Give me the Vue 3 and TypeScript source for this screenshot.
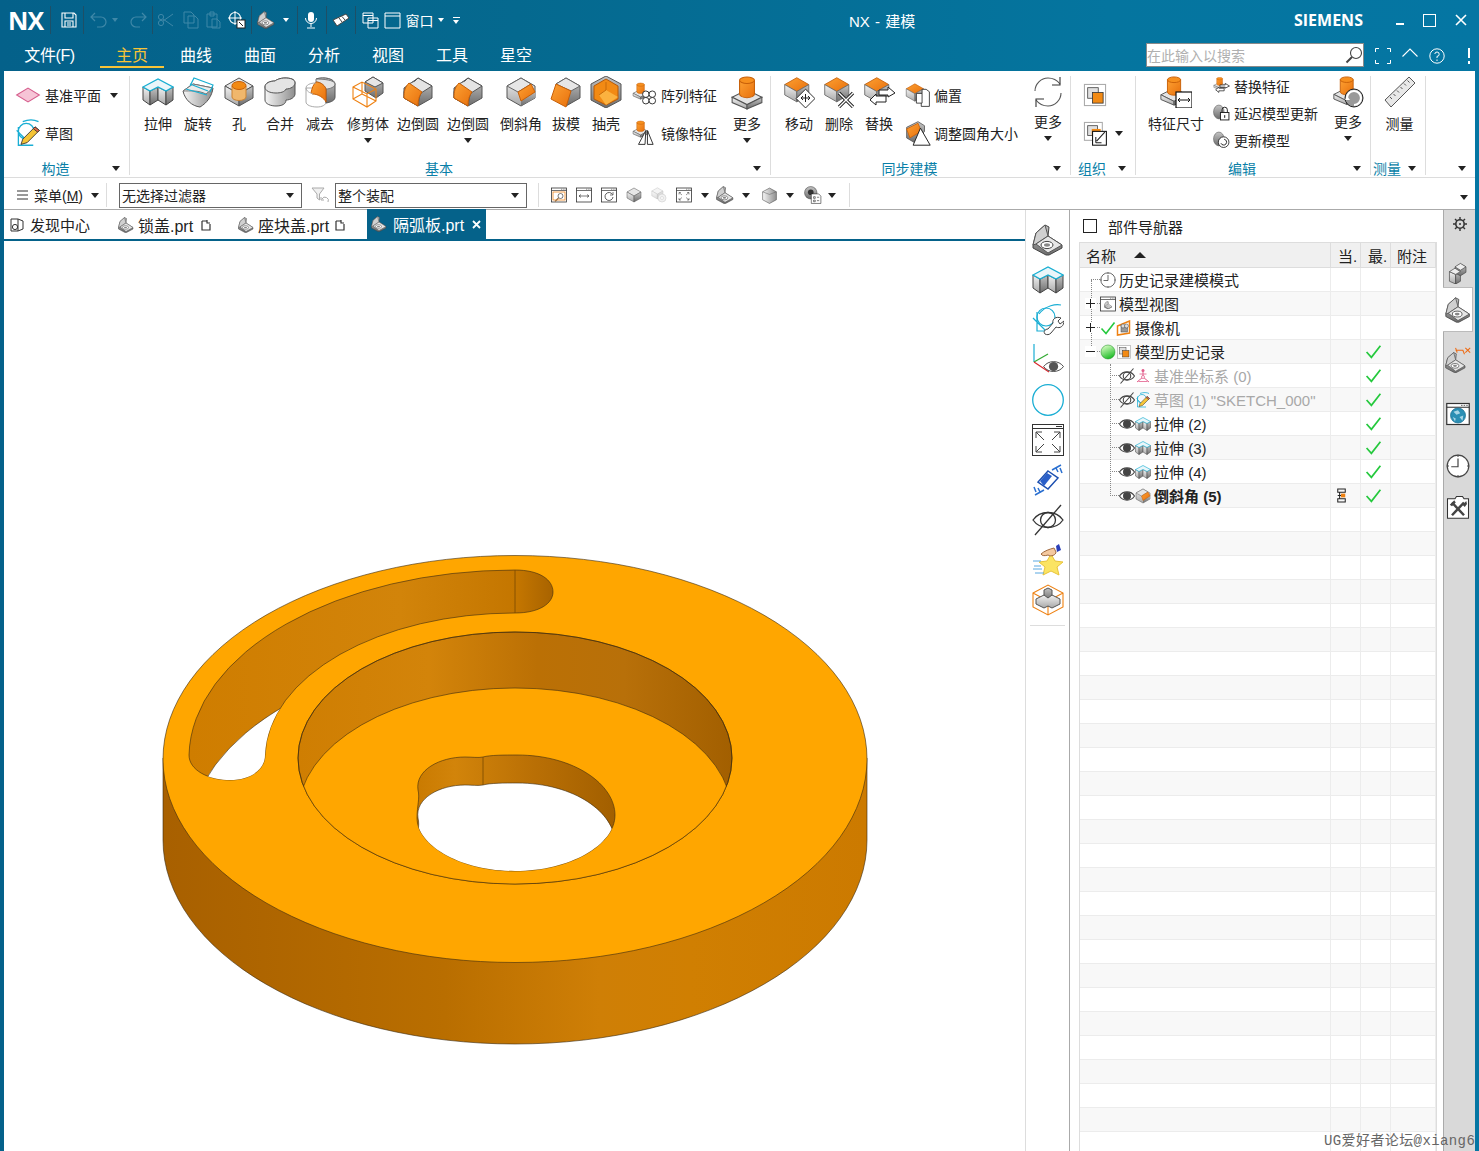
<script setup lang="ts">
import { h } from 'vue'
import type { FunctionalComponent } from 'vue'

const Ic: FunctionalComponent<{ n: string; s?: number }> = (props) =>
  h('svg', { width: props.s ?? 32, height: props.s ?? 32, viewBox: '0 0 32 32', class: 'ic' }, [
    h('use', { href: '#' + props.n }),
  ])
Ic.props = ['n', 's']

interface Btn {
  label: string
  icon: string
  w: number
  more?: boolean
}

const basic: Btn[] = [
  { label: '拉伸', icon: 'extrude', w: 40 },
  { label: '旋转', icon: 'revolve', w: 40 },
  { label: '孔', icon: 'hole', w: 42 },
  { label: '合并', icon: 'unite', w: 40 },
  { label: '减去', icon: 'subtract', w: 40 },
  { label: '修剪体', icon: 'trim', w: 56, more: true },
  { label: '边倒圆', icon: 'blend', w: 44 },
  { label: '边倒圆', icon: 'blend', w: 56, more: true },
  { label: '倒斜角', icon: 'chamfer', w: 50 },
  { label: '拔模', icon: 'draft', w: 40 },
  { label: '抽壳', icon: 'shell', w: 40 },
]
const sync: Btn[] = [
  { label: '移动', icon: 'move', w: 40 },
  { label: '删除', icon: 'del', w: 40 },
  { label: '替换', icon: 'replace', w: 40 },
]
const tabs = ['主页', '曲线', '曲面', '分析', '视图', '工具', '星空']
const viewIcons = ['vzoom', 'vfit', 'vrot', 'cubeg', 'gears']
const sideIcons = ['part', 'extrude', 'sketchtool', 'axeseye', 'circle', 'fit', 'diamond', 'eyeoff', 'star', 'wirecube']

interface Row {
  text: string
  indent: number
  marks: string[]
  toggle?: 'plus' | 'minus'
  dim?: boolean
  bold?: boolean
  latest?: boolean
  cur?: boolean
}
const rows: Row[] = [
  { text: '历史记录建模模式', indent: 20, marks: ['clock'] },
  { text: '模型视图', indent: 20, marks: ['views'], toggle: 'plus' },
  { text: '摄像机', indent: 20, marks: ['check', 'camera'], toggle: 'plus' },
  { text: '模型历史记录', indent: 20, marks: ['ball', 'org1'], toggle: 'minus', latest: true },
  { text: '基准坐标系 (0)', indent: 39, marks: ['eyeoffs', 'csys'], dim: true, latest: true },
  { text: '草图 (1) "SKETCH_000"', indent: 39, marks: ['eyeoffs', 'sketch'], dim: true, latest: true },
  { text: '拉伸 (2)', indent: 39, marks: ['eyes', 'extrude'], latest: true },
  { text: '拉伸 (3)', indent: 39, marks: ['eyes', 'extrude'], latest: true },
  { text: '拉伸 (4)', indent: 39, marks: ['eyes', 'extrude'], latest: true },
  { text: '倒斜角 (5)', indent: 39, marks: ['eyes', 'chamfer'], bold: true, latest: true, cur: true },
]
const emptyRows = 27
</script>

<template>
  <div class="app">
    <svg class="defs" width="0" height="0">
      <defs>
        <linearGradient id="gl" x1="0" y1="0" x2="0" y2="1"><stop offset="0" stop-color="#f2f2f2" /><stop offset="1" stop-color="#a8a8a8" /></linearGradient>
        <linearGradient id="gr" x1="0" y1="0" x2="0" y2="1"><stop offset="0" stop-color="#c4c4c4" /><stop offset="1" stop-color="#6c6c6c" /></linearGradient>
        <linearGradient id="go" x1="0" y1="0" x2="1" y2="1"><stop offset="0" stop-color="#fda133" /><stop offset="1" stop-color="#e8700c" /></linearGradient>
        <linearGradient id="gc" x1="0" y1="0" x2="1" y2="0"><stop offset="0" stop-color="#f6f6f6" /><stop offset="1" stop-color="#8e8e8e" /></linearGradient>
        <linearGradient id="gb" x1="0.3" y1="0.1" x2="0.7" y2="1"><stop offset="0" stop-color="#c7f7b5" /><stop offset="1" stop-color="#14b81e" /></linearGradient>

        <g id="cubebase">
          <polygon points="2,10 16,2 30,10 16,18" fill="#e6e6e6" stroke="#555" />
          <polygon points="2,10 16,18 16,30 2,22" fill="url(#gl)" stroke="#555" />
          <polygon points="30,10 16,18 16,30 30,22" fill="url(#gr)" stroke="#555" />
        </g>
        <g id="cubeor">
          <polygon points="2,10 16,2 30,10 16,18" fill="url(#go)" stroke="#c75f08" />
          <polygon points="2,10 16,18 16,30 2,22" fill="url(#gl)" stroke="#666" />
          <polygon points="30,10 16,18 16,30 30,22" fill="url(#gr)" stroke="#666" />
        </g>
        <g id="cylslab">
          <polygon points="2,20 16,13 30,20 16,27" fill="#e4e4e4" stroke="#555" />
          <polygon points="2,20 16,27 16,31 2,25" fill="url(#gl)" stroke="#555" />
          <polygon points="30,20 16,27 16,31 30,25" fill="url(#gr)" stroke="#555" />
          <path d="M9 4 V17 A7 3.4 0 0 0 23 17 V4 Z" fill="url(#go)" stroke="#c75f08" />
          <ellipse cx="16" cy="4" rx="7" ry="3" fill="#f7901e" stroke="#c75f08" />
        </g>

        <symbol id="extrude" viewBox="0 0 32 32">
          <polygon points="1,11 8,15 8,29 1,24" fill="url(#gl)" stroke="#444" />
          <polygon points="8,15 16,11 16,24 8,29" fill="url(#gr)" stroke="#444" />
          <polygon points="16,11 24,15 24,29 16,24" fill="url(#gl)" stroke="#444" />
          <polygon points="24,15 24,29 31,24 31,11" fill="url(#gr)" stroke="#444" />
          <polygon points="1,11 16,3 31,11 24,15 16,11 8,15" fill="#eaf6fa" stroke="#18aed2" stroke-width="1.3" />
        </symbol>
        <symbol id="revolve" viewBox="0 0 32 32">
          <path d="M1 15 L11 8 L31 12 C30 20 25 27 18 31 C10 30 3 24 1 15 Z" fill="url(#gc)" stroke="#555" />
          <path d="M1 15 L11 8 L31 12 L24 18 C16 14 8 15 1 15 Z" fill="#ececec" stroke="#777" />
          <path d="M8 10 L12 2 L31 9 L28 16 M8 8 L26 15 M4 13 L25 19" fill="none" stroke="#18aed2" stroke-width="1.2" />
        </symbol>
        <symbol id="hole" viewBox="0 0 32 32">
          <use href="#cubebase" />
          <path d="M9 10 V21 A7 3.5 0 0 0 23 21 V10 Z" fill="#f0b76c" stroke="#c98232" />
          <ellipse cx="16" cy="9.5" rx="7" ry="4" fill="#f28a14" stroke="#c75f08" />
        </symbol>
        <symbol id="unite" viewBox="0 0 32 32">
          <path d="M1 11 V24 C1 28 7 30 12 30 C18 30 22 28 22 24 C27 24 31 21 31 18 V7 C31 3 26 2 21 2 C16 2 12 4 11 5 C6 5 1 7 1 11 Z" fill="url(#gc)" stroke="#555" />
          <path d="M1 11 C1 7 6 5 11 5 C12 4 16 2 21 2 C26 2 31 3 31 7 C31 10 27 13 22 13 C21 16 16 17 12 17 C6 17 1 15 1 11 Z" fill="#e4e4e4" stroke="#555" />
        </symbol>
        <symbol id="subtract" viewBox="0 0 32 32">
          <path d="M2 12 V26 C2 29 7 31 13 31 C18 31 22 29 22 26 V12 Z" fill="#fff" stroke="#aaa" />
          <path d="M12 3 C20 0 31 3 31 8 V21 C31 24 28 26 22 27 L22 12 Z" fill="url(#gr)" stroke="#555" />
          <path d="M12 3 C19 3 31 4 31 8 C31 11 26 13 22 13 C20 9 16 6 12 6 Z" fill="#e4e4e4" stroke="#777" />
          <path d="M12 6 C17 6 22 10 22 14 V26 C20 22 14 18 9 18 C8 18 8 18 7 17 C8 12 9 9 12 6 Z" fill="url(#go)" stroke="#c75f08" />
          <path d="M12 7 C6 7 2 9 2 12 C2 15 6 17 9 18" fill="none" stroke="#aaa" />
        </symbol>
        <symbol id="trim" viewBox="0 0 32 32">
          <polygon points="13,6 21,1 31,7 31,17 24,22 13,15" fill="url(#gr)" stroke="#555" />
          <polygon points="13,6 21,1 31,7 23,11" fill="#e6e6e6" stroke="#555" />
          <path d="M1 11 L10 6 L24 13 L24 25 L15 31 L1 23 Z M1 11 L15 18 L24 13 M15 18 V31 M10 6 V18 L1 23 M10 18 L24 25" fill="none" stroke="#ee8112" stroke-width="1.1" />
        </symbol>
        <symbol id="blend" viewBox="0 0 32 32">
          <polygon points="16,2 30,10 30,22 16,30 2,22 2,12" fill="url(#gr)" stroke="#555" />
          <path d="M2 22 V16 C3 10 8 7 13 5 L16 2 L30 10 L19 17 C17 21 17 25 16 30 Z" fill="#e4e4e4" stroke="#555" />
          <path d="M2 22 L16 30 C16 24 17 20 20 16 L7 7 C3 11 2 15 2 22 Z" fill="url(#go)" stroke="#c75f08" />
        </symbol>
        <symbol id="chamfer" viewBox="0 0 32 32">
          <polygon points="2,10 16,2 30,10 30,22 16,30 2,22" fill="url(#gl)" stroke="#555" />
          <polygon points="30,14 30,22 16,30 16,22" fill="url(#gr)" />
          <polygon points="2,10 16,2 26,8 13,16" fill="#e6e6e6" stroke="#666" />
          <polygon points="13,16 26,8 30,16 16,25" fill="url(#go)" stroke="#c75f08" />
        </symbol>
        <symbol id="draft" viewBox="0 0 32 32">
          <polygon points="6,8 16,2 30,10 30,22 16,30" fill="url(#gr)" stroke="#555" />
          <polygon points="6,8 16,2 30,10 21,15" fill="#e6e6e6" stroke="#666" />
          <polygon points="6,8 21,15 16,31 1,23" fill="url(#go)" stroke="#c75f08" />
        </symbol>
        <symbol id="shell" viewBox="0 0 32 32">
          <polygon points="16,0 31,8 31,24 16,32 1,24 1,8" fill="url(#gr)" stroke="#555" />
          <polygon points="16,3 28,10 28,23 16,29 4,23 4,10" fill="#f28a14" stroke="#b85a08" />
          <polygon points="9,19 16,14 28,21 16,29" fill="#fbb23f" />
          <path d="M16 6 V14 L9 19" fill="none" stroke="#c86b0a" />
        </symbol>
        <symbol id="pattern" viewBox="0 0 32 32">
          <g transform="scale(.66) translate(0,1)"><use href="#cylslab" /></g>
          <g fill="#fff" stroke="#222" stroke-width="1.1"><circle cx="17" cy="15" r="4" /><circle cx="25" cy="15" r="4" /><circle cx="17" cy="23" r="4" /><circle cx="25" cy="23" r="4" /></g>
        </symbol>
        <symbol id="mirror" viewBox="0 0 32 32">
          <g transform="scale(.66) translate(0,1)"><use href="#cylslab" /></g>
          <path d="M17 13 L8 30 H16 Z M19 13 L26 30 H19 Z" fill="#fff" stroke="#222" stroke-width="1.1" />
        </symbol>
        <symbol id="more" viewBox="0 0 32 32"><use href="#cylslab" /></symbol>
        <symbol id="move" viewBox="0 0 32 32">
          <g transform="scale(.86)"><use href="#cubeor" /></g>
          <polygon points="24,14 34,24 24,34 14,24" fill="#fff" stroke="#222" transform="scale(.94)" />
          <path d="M19 22 H26 M22.5 18 V26 M20 20 L18 22 L20 24 M25 20 L27 22 L25 24" fill="none" stroke="#222" />
        </symbol>
        <symbol id="del" viewBox="0 0 32 32">
          <g transform="scale(.86)"><use href="#cubeor" /></g>
          <path d="M16 17 L30 31 M30 17 L16 31" stroke="#222" stroke-width="3.2" />
          <path d="M16 17 L30 31 M30 17 L16 31" stroke="#fff" stroke-width="1.4" />
        </symbol>
        <symbol id="replace" viewBox="0 0 32 32">
          <g transform="scale(.86)"><use href="#cubeor" /></g>
          <path d="M16 14 H25 V11 L32 17 L25 21 V19 H16 Z" fill="#fff" stroke="#222" />
          <path d="M23 20 H13 V18 L7 24 L13 29 V26 H23 Z" fill="#fff" stroke="#222" />
        </symbol>
        <symbol id="offset" viewBox="0 0 32 32">
          <g transform="scale(.76) translate(0,1)"><use href="#cubeor" /></g>
          <path d="M14 14 H21 V9 H26 L30 12 V30 H20 V26 H14 Z" fill="#fff" stroke="#222" />
          <path d="M21 14 V26 H20" fill="none" stroke="#222" />
        </symbol>
        <symbol id="resize" viewBox="0 0 32 32">
          <polygon points="2,9 16,2 24,7 24,14 12,28 2,22" fill="url(#gr)" stroke="#555" />
          <polygon points="2,11 16,4 20,14 6,22" fill="url(#go)" stroke="#c75f08" />
          <polygon points="19,10 31,31 10,31" fill="#fff" stroke="#222" stroke-width="1.2" />
        </symbol>
        <symbol id="sync" viewBox="0 0 32 32">
          <path d="M3 15 C3 8 9 2 16 2 C21 2 25 4 28 8 M29 17 C29 24 23 30 16 30 C11 30 7 28 4 24" fill="none" stroke="#555" stroke-width="1.1" />
          <path d="M28 1 V9 H20 M4 31 V23 H12" fill="none" stroke="#333" stroke-width="1.1" />
        </symbol>
        <symbol id="org1" viewBox="0 0 32 32">
          <rect x="3" y="3" width="26" height="26" fill="#fff" stroke="#aaa" stroke-width="1.3" />
          <rect x="7" y="7" width="13" height="13" fill="#e0e0e0" stroke="#444" />
          <rect x="13" y="13" width="13" height="13" fill="#f28a14" stroke="#333" />
        </symbol>
        <symbol id="org2" viewBox="0 0 32 32">
          <rect x="3" y="3" width="22" height="22" fill="#fff" stroke="#aaa" stroke-width="1.3" />
          <rect x="7" y="7" width="12" height="12" fill="#e0e0e0" stroke="#444" />
          <rect x="12" y="11" width="11" height="8" fill="#f28a14" />
          <rect x="13" y="14" width="17" height="17" fill="#fff" stroke="#111" stroke-width="1.3" />
          <path d="M17 28 V21 M17 28 H24 M18 26 L28 15" fill="none" stroke="#222" stroke-width="1.3" />
        </symbol>
        <symbol id="dim" viewBox="0 0 32 32">
          <g transform="translate(-1,0) scale(.94)"><use href="#cylslab" /></g>
          <rect x="16" y="16" width="16" height="16" fill="#fff" stroke="#111" stroke-width="1.2" />
          <path d="M18 24 H30 M20 22 L18 24 L20 26 M28 22 L30 24 L28 26" fill="none" stroke="#111" />
        </symbol>
        <symbol id="repl2" viewBox="0 0 32 32">
          <g transform="scale(.78)"><use href="#cylslab" /></g>
          <path d="M13 15 H23 V12 L31 17 L23 21 V19 H13 Z M21 21 H11 V19 L5 24 L11 29 V26 H21 Z" fill="#fff" stroke="#222" stroke-width="1.4" />
        </symbol>
        <symbol id="lock" viewBox="0 0 32 32">
          <ellipse cx="11" cy="15" rx="10" ry="13" fill="url(#gr)" stroke="#555" />
          <rect x="14" y="16" width="16" height="14" fill="#fff" stroke="#222" stroke-width="1.8" />
          <path d="M17 16 V11 A5 5 0 0 1 27 11 V16" fill="none" stroke="#222" stroke-width="1.8" />
          <rect x="21" y="21" width="2" height="5" fill="#222" />
        </symbol>
        <symbol id="update" viewBox="0 0 32 32">
          <ellipse cx="11" cy="15" rx="10" ry="13" fill="url(#gr)" stroke="#555" />
          <circle cx="20" cy="21" r="10" fill="#fff" stroke="#222" stroke-width="1.6" />
          <path d="M15 23 A5.5 5.5 0 1 0 21 15.5" fill="none" stroke="#222" stroke-width="1.8" />
        </symbol>
        <symbol id="moreup" viewBox="0 0 32 32">
          <g transform="scale(.92)"><use href="#cylslab" /></g>
          <circle cx="22" cy="22" r="9" fill="#999" stroke="#222" />
          <path d="M15 22 A7 7 0 1 1 22 29" fill="none" stroke="#fff" stroke-width="2.2" />
          <path d="M13 24 L15 20 L18 24 Z" fill="#fff" />
        </symbol>
        <symbol id="ruler" viewBox="0 0 32 32">
          <polygon points="1,24 25,1 31,7 7,31" fill="#e8e8e8" stroke="#555" />
          <path d="M6 21 L8 23 M9.5 18 L11.5 20 M13 14.5 L15 16.5 M16.5 11 L18.5 13 M20 7.5 L22 9.5 M23.5 4.5 L25.5 6.5" stroke="#555" />
        </symbol>
        <symbol id="plane" viewBox="0 0 32 32">
          <polygon points="3,16 16,8 29,16 16,24" fill="#f6c4d6" stroke="#d55d8c" stroke-width="1.2" />
        </symbol>
        <symbol id="sketch" viewBox="0 0 32 32">
          <path d="M10 3 C17 0 24 1 28 3 M3 13 L12 22 M5 9 V30 H22" fill="none" stroke="#1aaed4" stroke-width="1.5" />
          <circle cx="14" cy="14" r="9" fill="none" stroke="#1aaed4" stroke-width="1.5" />
          <path d="M8 29 L10 23 L24 9 L29 13 L15 27 Z" fill="#f5c436" stroke="#333" />
          <path d="M24 9 L29 13 L27 15 L22 11 Z" fill="#e86a4a" stroke="#333" />
        </symbol>
        <symbol id="part" viewBox="0 0 32 32">
          <path d="M1 21 L4 9 L13 1 L17 3 L16 12 L30 21 L30 24 L17 31 L14 31 L1 24 Z" fill="url(#gr)" stroke="#444" />
          <path d="M1 21 L4 9 L13 1 L16 12 L4 20 Z" fill="#d0d0d0" stroke="#555" />
          <path d="M4 20 L16 12 L30 21 L16 29 Z" fill="#e6e6e6" stroke="#555" />
          <ellipse cx="15" cy="21" rx="6" ry="3.6" fill="#fff" stroke="#444" />
          <ellipse cx="15" cy="21" rx="3" ry="1.7" fill="#888" />
        </symbol>
        <symbol id="sketchtool" viewBox="0 0 32 32">
          <path d="M7 10 C14 1 24 0 29 1 M1 14 L14 27 M5 8 V27 H17" fill="none" stroke="#1aaed4" stroke-width="1.2" />
          <circle cx="14" cy="13" r="9" fill="none" stroke="#1aaed4" stroke-width="1.2" />
          <path d="M13 30 C11 28 13 25 16 25 L21 19 C20 15 24 12 29 14 L26 17 L28 20 L32 17 C32 22 28 25 24 23 L19 29 C17 31 15 31 13 30 Z" fill="#fff" stroke="#444" />
        </symbol>
        <symbol id="axeseye" viewBox="0 0 32 32">
          <path d="M2 0 V18" fill="none" stroke="#1aaed4" stroke-width="1.2" />
          <path d="M2 18 L16 10" stroke="#3a3" stroke-width="1.2" />
          <path d="M2 18 L17 28" stroke="#d8262c" stroke-width="1.2" />
          <g transform="translate(11,12) scale(.66)"><use href="#eyeg" /></g>
        </symbol>
        <g id="eyeg">
          <path d="M1 16 C8 6 24 6 31 16 C24 26 8 26 1 16 Z" fill="#fff" stroke="#333" stroke-width="1.3" />
          <circle cx="16" cy="16" r="7" fill="#555" />
        </g>
        <symbol id="eyes" viewBox="0 0 32 32">
          <path d="M1 16 C8 5 24 5 31 16 C24 27 8 27 1 16 Z" fill="#fff" stroke="#444" stroke-width="2.2" />
          <circle cx="16" cy="16" r="8" fill="#444" />
        </symbol>
        <symbol id="eyeoff" viewBox="0 0 32 32">
          <path d="M1 16 C8 6 24 6 31 16 C24 26 8 26 1 16 Z" fill="#fff" stroke="#333" stroke-width="1.3" />
          <circle cx="16" cy="16" r="7.5" fill="none" stroke="#333" stroke-width="1.3" />
          <path d="M3 31 L29 1" stroke="#333" stroke-width="1.3" />
        </symbol>
        <symbol id="eyeoffs" viewBox="0 0 32 32">
          <path d="M1 16 C8 5 24 5 31 16 C24 27 8 27 1 16 Z" fill="#fff" stroke="#444" stroke-width="2.2" />
          <circle cx="16" cy="16" r="7.5" fill="none" stroke="#444" stroke-width="2.2" />
          <path d="M3 31 L29 1" stroke="#444" stroke-width="2.2" />
        </symbol>
        <symbol id="circle" viewBox="0 0 32 32"><circle cx="16" cy="16" r="15.3" fill="#fff" stroke="#1aaed4" stroke-width="1.3" /></symbol>
        <symbol id="fit" viewBox="0 0 32 32">
          <rect x="0.5" y="0.5" width="31" height="31" fill="#fff" stroke="#333" />
          <path d="M0 4.5 H32 M24 2.5 H30" stroke="#333" />
          <path d="M4 8 H10 M4 8 V14 M4 8 L12 16 M28 8 H22 M28 8 V14 M28 8 L20 16 M4 28 H10 M4 28 V22 M4 28 L12 20 M28 28 H22 M28 28 V22 M28 28 L20 20" fill="none" stroke="#444" />
        </symbol>
        <symbol id="diamond" viewBox="0 0 32 32">
          <polygon points="16,7 26,14 16,25 6,18" fill="#fff" stroke="#1b4fb0" stroke-width="1.5" />
          <polygon points="15,9 20,12 12,22 8,17" fill="#2a5fc8" />
          <path d="M20 6 L29 1 M28 4 L30 9 M24 4 L26 8 M12 26 L3 31 M4 28 L2 23 M8 28 L6 24" fill="none" stroke="#2a6fd0" stroke-width="1.5" />
        </symbol>
        <symbol id="star" viewBox="0 0 32 32">
          <polygon points="19,10 23,17 31,18 25,23 27,31 19,27 11,31 13,23 7,18 15,17" fill="#fbe463" stroke="#e8c33a" />
          <path d="M1 17 H9 M2 22 H9 M1 25 H10 M3 29 H12" stroke="#5aa8e0" />
          <path d="M9 10 C12 7 18 5 22 4 L24 8 C24 11 19 13 16 11 C13 12 10 12 9 10 Z" fill="#f4c9a0" stroke="#a06a40" />
          <path d="M24 2 L27 0 L29 6 L25 8 Z" fill="#2b3fb8" />
        </symbol>
        <symbol id="wirecube" viewBox="0 0 32 32">
          <path d="M1 9 L16 1 L31 9 V23 L16 31 L1 23 Z M1 9 L16 17 L31 9 M16 17 V31" fill="none" stroke="#ee8112" stroke-width="1.1" />
          <polygon points="12,6 16,4 20,6 20,14 16,16 12,14" fill="url(#gr)" stroke="#555" />
          <polygon points="4,15 12,11 16,14 20,11 28,15 28,20 20,24 16,22 12,24 4,20" fill="url(#gl)" stroke="#555" />
        </symbol>
        <symbol id="cubeg" viewBox="0 0 32 32"><use href="#cubebase" /></symbol>
        <symbol id="gears" viewBox="0 0 32 32">
          <g opacity=".4"><g transform="scale(.8)"><use href="#cubebase" /></g><circle cx="22" cy="22" r="8" fill="#ddd" stroke="#777" /><circle cx="22" cy="22" r="3" fill="#fff" stroke="#777" /></g>
        </symbol>
        <g id="win">
          <rect x="1" y="2" width="30" height="28" fill="#fff" stroke="#333" stroke-width="1.6" />
          <path d="M1 7 H31" stroke="#333" stroke-width="1.4" />
          <path d="M20 4.5 H29" stroke="#333" stroke-dasharray="2 1.5" />
        </g>
        <symbol id="vzoom" viewBox="0 0 32 32">
          <use href="#win" />
          <rect x="4" y="10" width="24" height="16" fill="none" stroke="#ee8112" stroke-width="1.5" />
          <circle cx="19" cy="18" r="5" fill="#fff" stroke="#333" stroke-width="1.3" />
          <path d="M15 22 L8 29" stroke="#a07040" stroke-width="2.4" />
        </symbol>
        <symbol id="vfit" viewBox="0 0 32 32">
          <use href="#win" />
          <path d="M6 18 H26 M10 15 L6 18 L10 21 M22 15 L26 18 L22 21" fill="none" stroke="#333" stroke-width="1.3" />
        </symbol>
        <symbol id="vrot" viewBox="0 0 32 32">
          <use href="#win" />
          <path d="M23 15 A8 8 0 1 0 24 20" fill="none" stroke="#333" stroke-width="1.6" />
          <path d="M24 10 V16 H18" fill="none" stroke="#333" stroke-width="1.3" />
        </symbol>
        <symbol id="vfit2" viewBox="0 0 32 32">
          <use href="#win" />
          <path d="M6 11 L12 16 M26 11 L20 16 M6 26 L12 21 M26 26 L20 21 M6 11 H10 M6 11 V15 M26 11 H22 M26 11 V15 M6 26 H10 M6 26 V22 M26 26 H22 M26 26 V22" fill="none" stroke="#333" />
        </symbol>
        <symbol id="cyl" viewBox="0 0 32 32">
          <polygon points="16,2 29,9 29,24 16,31 3,24 3,9" fill="url(#gc)" stroke="#444" />
          <path d="M3 9 L16 14 L29 9" fill="none" stroke="#666" />
        </symbol>
        <symbol id="visopt" viewBox="0 0 32 32">
          <circle cx="12" cy="12" r="11" fill="url(#gr)" stroke="#444" />
          <circle cx="12" cy="11" r="5" fill="#333" />
          <path d="M13 14 H26 L30 18 V31 H13 Z" fill="#fff" stroke="#222" />
          <path d="M17 19 H20 V22 H17 Z M17 25 H20 V28 H17 Z M23 20 H27 M23 26 H27" stroke="#222" fill="none" />
        </symbol>
        <symbol id="clock" viewBox="0 0 32 32">
          <circle cx="16" cy="16" r="14.4" fill="#fff" stroke="#444" stroke-width="1.6" />
          <path d="M16 6 V17 H7" fill="none" stroke="#444" stroke-width="1.6" />
          <path d="M16 1 V4 M16 28 V31 M1 16 H4 M28 16 H31" stroke="#444" stroke-width="1.4" />
        </symbol>
        <symbol id="views" viewBox="0 0 32 32">
          <use href="#win" />
          <g transform="translate(8,10) scale(.52)"><use href="#part" width="32" height="32" /></g>
        </symbol>
        <symbol id="camera" viewBox="0 0 32 32">
          <polygon points="3,12 27,2 27,26 3,30" fill="#fff" stroke="#ee8112" stroke-width="3" />
          <rect x="10" y="11" width="13" height="13" fill="#999" stroke="#444" />
          <circle cx="14" cy="12" r="4" fill="#ddd" stroke="#444" />
          <circle cx="21" cy="12" r="4" fill="#ddd" stroke="#444" />
        </symbol>
        <symbol id="check" viewBox="0 0 32 32">
          <path d="M3 17 L12 27 L29 5" fill="none" stroke="#25c93d" stroke-width="3.2" />
        </symbol>
        <symbol id="ball" viewBox="0 0 32 32"><circle cx="16" cy="16" r="14" fill="url(#gb)" stroke="#178a1c" /></symbol>
        <symbol id="csys" viewBox="0 0 32 32">
          <path d="M16 3 V18 M16 18 L4 28 M16 18 L28 28" fill="none" stroke="#e25e8c" stroke-width="2" />
          <path d="M9 12 H23 M7 27 H25" stroke="#e25e8c" stroke-width="1.6" />
          <circle cx="16" cy="5" r="3" fill="#e25e8c" />
          <circle cx="16" cy="18" r="3" fill="#fff" stroke="#e25e8c" stroke-width="1.5" />
        </symbol>
        <symbol id="parallel" viewBox="0 0 32 32">
          <path d="M8 2 H24 V9 H8 Z M8 23 H24 V30 H8 Z M12 9 V23 M8 16 H15" fill="none" stroke="#222" stroke-width="2.2" />
          <rect x="15" y="12" width="9" height="8" fill="#ee8112" />
        </symbol>
        <symbol id="cubes" viewBox="0 0 32 32">
          <polygon points="5,14 5,28 14,32 14,18" fill="url(#gl)" stroke="#444" />
          <polygon points="14,18 14,32 21,28 21,14" fill="url(#gr)" stroke="#444" />
          <polygon points="13,8 13,16 21,20 29,15 29,7 21,3" fill="url(#gr)" stroke="#444" />
          <polygon points="13,7 21,2 29,7 21,12" fill="#eee" stroke="#444" />
          <polygon points="5,14 13,9 21,14 14,18" fill="#eee" stroke="#444" />
        </symbol>
        <symbol id="partdim" viewBox="0 0 32 32">
          <g transform="translate(0,6) scale(.82)"><use href="#part" width="32" height="32" /></g>
          <path d="M13 1 L15 7 M13 4 H22 L24 9 M25 1 L31 7 M31 1 L25 7" fill="none" stroke="#ee6a12" stroke-width="1.3" />
        </symbol>
        <symbol id="web" viewBox="0 0 32 32">
          <use href="#win" />
          <circle cx="16" cy="18" r="10" fill="#2b8fb4" stroke="#1b6f92" />
          <path d="M10 13 L16 11 L19 15 L14 17 Z M18 20 L23 18 L22 25 Z M9 20 L13 22 L12 26 Z" fill="#a8d6e6" />
        </symbol>
        <symbol id="tools" viewBox="0 0 32 32">
          <path d="M2 5 H12 L14 2 H22 L24 5 H30 V31 H2 Z" fill="#fff" stroke="#333" stroke-width="1.4" />
          <path d="M8 27 L24 10 M24 27 L8 10" stroke="#444" stroke-width="3.4" />
          <path d="M5 13 L11 7 L13 10 L8 15 Z M27 8 L22 13 L25 16 L28 12 Z" fill="#444" />
        </symbol>
      </defs>
    </svg>

    <header class="titlebar">
      <div class="qat">
        <span class="logo">NX</span>
        <i class="qsep"></i>
        <svg class="qi save" width="18" height="18" viewBox="0 0 18 18"><path d="M2 2 H14 L16 4 V16 H2 Z M5 2 V7 H13 V2 M5 16 V10 H13 V16 M7 12 H11 M7 14 H11" fill="none" stroke="#fff" stroke-width="1.1" /></svg>
        <i class="qsep"></i>
        <svg class="qi dimq undo" width="18" height="16" viewBox="0 0 18 16"><path d="M5 1 L1 5 L5 9 M1 5 H11 A5 5 0 0 1 11 15 H7" fill="none" stroke="currentColor" stroke-width="1.2" /></svg>
        <span class="caret sm dimc uc"></span>
        <svg class="qi dimq redo" width="18" height="16" viewBox="0 0 18 16"><path d="M13 1 L17 5 L13 9 M17 5 H7 A5 5 0 0 0 7 15 H11" fill="none" stroke="currentColor" stroke-width="1.2" /></svg>
        <i class="qsep"></i>
        <svg class="qi dimq q1" width="18" height="16" viewBox="0 0 18 16"><path d="M16 2 L6 9 M16 14 L6 7" stroke="currentColor" /><circle cx="4" cy="5" r="2.6" fill="none" stroke="currentColor" /><circle cx="4" cy="11" r="2.6" fill="none" stroke="currentColor" /></svg>
        <svg class="qi dimq q2" width="18" height="18" viewBox="0 0 18 18"><path d="M2 1 H9 L12 4 V12 H2 Z M6 5 H13 L16 8 V17 H6 Z" fill="none" stroke="currentColor" /></svg>
        <svg class="qi dimq q3" width="18" height="18" viewBox="0 0 18 18"><path d="M3 3 H13 V16 H3 Z M6 1 H10 V5 H6 Z M8 8 H13 L16 11 V17 H8 Z" fill="none" stroke="currentColor" /></svg>
        <svg class="qi q4" width="18" height="18" viewBox="0 0 18 18"><circle cx="7" cy="7" r="5.5" fill="none" stroke="#fff" stroke-width="1.2" /><path d="M7 0 V14 M0 7 H14" stroke="#fff" /><rect x="9" y="9" width="8" height="8" fill="#fff" stroke="#222" /><path d="M11 11 L15 15" stroke="#222" /></svg>
        <i class="qsep"></i>
        <Ic n="part" :s="18" class="qpart" />
        <span class="caret sm white pc"></span>
        <i class="qsep"></i>
        <svg class="qi mic" width="14" height="18" viewBox="0 0 14 18"><rect x="4" y="1" width="6" height="10" rx="3" fill="#fff" /><path d="M1.5 7 A5.5 5.5 0 0 0 12.5 7 M7 13 V16 M3 17 H11" fill="none" stroke="#fff" /></svg>
        <i class="qsep"></i>
        <svg class="qi flag" width="18" height="14" viewBox="0 0 18 14"><path d="M1 7 L14 1 L17 5 L5 13 Z" fill="#fff" stroke="#444" /><path d="M7 5 L10 9 M10 3.5 L13 7" stroke="#444" /></svg>
        <i class="qsep"></i>
        <svg class="qi w1" width="17" height="17" viewBox="0 0 17 17"><path d="M1 1 H11 V11 H1 Z M1 3.5 H11 M6 6 H16 V16 H6 Z M6 8.5 H16" fill="#05648c" stroke="#fff" /></svg>
        <svg class="qi w2" width="17" height="17" viewBox="0 0 17 17"><path d="M1 1 H16 V16 H1 Z M1 4 H16" fill="none" stroke="#fff" /></svg>
        <span class="win-label">窗口</span>
        <span class="caret sm white"></span>
        <span class="custom"><i></i><span class="caret sm white"></span></span>
      </div>
      <span class="title">NX - 建模</span>
      <span class="siemens">SIEMENS</span>
      <span class="winbtn min"></span>
      <span class="winbtn max"></span>
      <svg class="close" width="12" height="12" viewBox="0 0 12 12"><path d="M1 1 L11 11 M11 1 L1 11" stroke="#fff" stroke-width="1.6" /></svg>
    </header>

    <nav class="menubar">
      <span class="mtab file">文件(F)</span>
      <span v-for="(t, i) in tabs" :key="t" class="mtab" :class="{ on: i === 0 }">{{ t }}</span>
      <div class="search">
        <span>在此输入以搜索</span>
        <svg width="18" height="18" viewBox="0 0 18 18"><circle cx="11" cy="7" r="5.5" fill="#fff" stroke="#444" stroke-width="1.1" /><path d="M7 11 L1.5 16.5" stroke="#444" stroke-width="2" /></svg>
      </div>
      <svg class="mi" width="16" height="16" viewBox="0 0 16 16"><path d="M0.5 4 V0.5 H4 M12 0.5 H15.5 V4 M15.5 12 V15.5 H12 M4 15.5 H0.5 V12" fill="none" stroke="#fff" /></svg>
      <svg class="mi" width="16" height="9" viewBox="0 0 16 9"><path d="M0.5 8.5 L8 1 L15.5 8.5" fill="none" stroke="#fff" stroke-width="1.1" /></svg>
      <svg class="mi" width="16" height="16" viewBox="0 0 16 16"><circle cx="8" cy="8" r="7.2" fill="none" stroke="#fff" /><path d="M5.8 6 A2.2 2.2 0 1 1 8 8.4 V10 M8 11.5 V13" fill="none" stroke="#fff" /></svg>
      <svg class="mi bang" width="4" height="16" viewBox="0 0 4 16"><path d="M2 0 V10 M2 13 V16" stroke="#fff" stroke-width="2" /></svg>
    </nav>

    <section class="ribbon">
      <div class="group g1">
        <div class="gbody col-small">
          <div class="srow"><Ic n="plane" :s="28" /><span class="stext">基准平面</span><span class="caret"></span></div>
          <div class="srow"><Ic n="sketch" :s="28" /><span class="stext">草图</span></div>
        </div>
        <div class="glabel"><span>构造</span><i class="caret"></i></div>
      </div>

      <div class="group g2">
        <div class="gbody pad8">
          <div v-for="(b, i) in basic" :key="i" class="big" :style="{ width: b.w + 'px' }">
            <Ic :n="b.icon" />
            <span>{{ b.label }}</span>
            <i v-if="b.more" class="caret"></i>
          </div>
          <div class="smallcol w101">
            <div class="srow2"><Ic n="pattern" :s="26" /><span>阵列特征</span></div>
            <div class="srow2"><Ic n="mirror" :s="26" /><span>镜像特征</span></div>
          </div>
          <div class="big more"><Ic n="more" :s="34" /><span>更多</span><i class="caret"></i></div>
        </div>
        <div class="glabel"><span>基本</span><i class="caret"></i></div>
      </div>

      <div class="group g3">
        <div class="gbody pad8">
          <div v-for="b in sync" :key="b.label" class="big w40"><Ic :n="b.icon" /><span>{{ b.label }}</span></div>
          <div class="smallcol w149">
            <div class="srow2"><Ic n="offset" :s="26" /><span>偏置</span></div>
            <div class="srow2"><Ic n="resize" :s="26" /><span>调整圆角大小</span></div>
          </div>
          <div class="big more"><Ic n="sync" /><span>更多</span><i class="caret"></i></div>
        </div>
        <div class="glabel"><span>同步建模</span><i class="caret"></i></div>
      </div>

      <div class="group g4">
        <div class="gbody org">
          <Ic n="org1" :s="26" />
          <div class="org2"><Ic n="org2" :s="26" /><i class="caret"></i></div>
        </div>
        <div class="glabel"><span>组织</span><i class="caret"></i></div>
      </div>

      <div class="group g5">
        <div class="gbody pad12">
          <div class="big w56"><Ic n="dim" /><span>特征尺寸</span></div>
          <div class="smallcol tri">
            <div class="srow3"><Ic n="repl2" :s="17" /><span>替换特征</span></div>
            <div class="srow3"><Ic n="lock" :s="17" /><span>延迟模型更新</span></div>
            <div class="srow3"><Ic n="update" :s="17" /><span>更新模型</span></div>
          </div>
          <div class="big more"><Ic n="moreup" /><span>更多</span><i class="caret"></i></div>
        </div>
        <div class="glabel"><span>编辑</span><i class="caret"></i></div>
      </div>

      <div class="group g6">
        <div class="gbody center"><div class="big w40"><Ic n="ruler" /><span>测量</span></div></div>
        <div class="glabel"><span>测量</span><i class="caret"></i></div>
      </div>

      <div class="group g7">
        <div class="gbody"></div>
        <div class="glabel"><span></span><i class="caret"></i></div>
      </div>
    </section>

    <section class="toolbar">
      <svg class="burger" width="11" height="10" viewBox="0 0 11 10"><path d="M0 1 H11 M0 5 H11 M0 9 H11" stroke="#333" /></svg>
      <span class="menu-btn">菜单(<u>M</u>)</span>
      <i class="caret"></i>
      <i class="tsep s1"></i>
      <div class="select filter"><span>无选择过滤器</span><i class="caret"></i></div>
      <svg class="funnel" width="18" height="18" viewBox="0 0 18 18"><path d="M1 2 H13 L8.5 8 V14 L6 12 V8 Z" fill="#f0f0f0" stroke="#aaa" /><path d="M17 16 A3 3 0 0 0 11 13 M10 11 V14 H13" fill="none" stroke="#aaa" /></svg>
      <div class="select scope"><span>整个装配</span><i class="caret"></i></div>
      <i class="tsep s2"></i>
      <div class="tools">
        <Ic v-for="v in viewIcons" :key="v" :n="v" :s="16" class="tool" />
        <Ic n="vfit2" :s="16" class="tool" /><i class="caret"></i>
        <Ic n="part" :s="18" class="tool a1" /><i class="caret"></i>
        <Ic n="cyl" :s="17" class="tool a2" /><i class="caret"></i>
        <Ic n="visopt" :s="18" class="tool a3" /><i class="caret"></i>
      </div>
      <i class="tsep s3"></i>
      <i class="caret end"></i>
    </section>

    <main class="workspace">
      <div class="docarea">
        <div class="doctabs">
          <div class="dtab first">
            <svg width="14" height="14" viewBox="0 0 14 14"><path d="M1 1 H8 L13 3 V11 L8 13 H1 Z M8 1 V13" fill="none" stroke="#333" /><circle cx="5" cy="9" r="2.6" fill="none" stroke="#333" /></svg>
            <span>发现中心</span>
          </div>
          <div class="dtab w120">
            <Ic n="part" :s="16" /><span>锁盖.prt</span>
            <svg class="mod" width="10" height="12" viewBox="0 0 10 12"><path d="M1 2 H6 M1 2 V11 H9 V5 M6 1 V4 H9" fill="none" stroke="#333" stroke-width="1.2" /></svg>
          </div>
          <div class="dtab w129">
            <Ic n="part" :s="16" /><span>座块盖.prt</span>
            <svg class="mod" width="10" height="12" viewBox="0 0 10 12"><path d="M1 2 H6 M1 2 V11 H9 V5 M6 1 V4 H9" fill="none" stroke="#333" stroke-width="1.2" /></svg>
          </div>
          <div class="dtab active">
            <Ic n="part" :s="16" /><span>隔弧板.prt</span>
            <svg class="x" width="9" height="9" viewBox="0 0 9 9"><path d="M1 1 L8 8 M8 1 L1 8" stroke="#fff" stroke-width="1.8" /></svg>
          </div>
        </div>
        <div class="canvas">
          <svg class="model" width="1021" height="910" viewBox="4 241 1021 910">
            <defs>
              <linearGradient id="sideG" gradientUnits="userSpaceOnUse" x1="163" x2="867" y1="0" y2="0">
                <stop offset="0" stop-color="#a86000" /><stop offset=".4" stop-color="#b96e00" /><stop offset=".62" stop-color="#cf7f06" /><stop offset=".75" stop-color="#d07f02" /><stop offset="1" stop-color="#cc7a00" />
              </linearGradient>
              <linearGradient id="slotG" gradientUnits="userSpaceOnUse" x1="189" x2="553" y1="0" y2="0">
                <stop offset="0" stop-color="#cf7d00" /><stop offset=".58" stop-color="#d2840a" /><stop offset=".9" stop-color="#c47600" /><stop offset="1" stop-color="#a86300" />
              </linearGradient>
              <linearGradient id="recG" gradientUnits="userSpaceOnUse" x1="298" x2="733" y1="0" y2="0">
                <stop offset="0" stop-color="#cf7e02" /><stop offset=".3" stop-color="#d3840a" /><stop offset=".55" stop-color="#bb7005" /><stop offset=".75" stop-color="#b87009" /><stop offset="1" stop-color="#a25f00" />
              </linearGradient>
              <linearGradient id="holeG" gradientUnits="userSpaceOnUse" x1="415" x2="615" y1="0" y2="0">
                <stop offset="0" stop-color="#c97a00" /><stop offset=".2" stop-color="#d2840a" /><stop offset=".6" stop-color="#b96f05" /><stop offset="1" stop-color="#a25f00" />
              </linearGradient>
              <path id="slotP" d="M515 570 A326 188 0 0 0 189 755 C189 770 208 780 230 780 C250 780 265 770 265 755 A250 145 0 0 1 515 613 C540 613 553 603 553 592 C553 580 540 570 515 570 Z" />
              <path id="holeP" d="M483 757 C490 755 505 755 517 755 C575 755 615 785 615 815 C615 845 570 871 515 871 C460 871 417 845 417 818 C417 806 420 798 418 790 C415 770 440 757 465 757 C472 757 478 758 483 757 Z" />
              <clipPath id="slotC"><use href="#slotP" /></clipPath>
              <clipPath id="recC"><ellipse cx="515" cy="758" rx="217" ry="126" /></clipPath>
              <clipPath id="holeC"><use href="#holeP" /></clipPath>
            </defs>
            <path d="M163 758 V840 A352 204 0 0 0 867 840 V758 Z" fill="url(#sideG)" stroke="#3a2a10" stroke-width=".6" />
            <ellipse cx="515" cy="759" rx="352" ry="203.5" fill="#ffa600" stroke="#3a2a10" stroke-width=".6" />

            <use href="#slotP" fill="url(#slotG)" stroke="#3a2a10" stroke-width=".6" />
            <g clip-path="url(#slotC)"><use href="#slotP" y="81" fill="#fff" stroke="#3a2a10" stroke-width=".6" /></g>
            <path d="M515 570 V613" stroke="#7a4a00" stroke-width=".8" />

            <ellipse cx="515" cy="758" rx="217" ry="126" fill="url(#recG)" stroke="#3a2a10" stroke-width=".6" />
            <g clip-path="url(#recC)"><ellipse cx="515" cy="814" rx="217" ry="126" fill="#ffa600" stroke="#3a2a10" stroke-width=".6" /></g>
            <ellipse cx="515" cy="758" rx="217" ry="126" fill="none" stroke="#3a2a10" stroke-width=".6" />

            <use href="#holeP" fill="url(#holeG)" stroke="#3a2a10" stroke-width=".6" />
            <g clip-path="url(#holeC)"><use href="#holeP" y="28" fill="#fff" stroke="#3a2a10" stroke-width=".6" /></g>
            <path d="M483 757 V785" stroke="#7a4a00" stroke-width=".8" />
          </svg>
        </div>
      </div>

      <aside class="vtools">
        <Ic v-for="n in sideIcons" :key="n" :n="n" :s="32" />
        <i class="vsep"></i>
      </aside>

      <section class="navigator">
        <div class="navhead"><i class="box"></i><span>部件导航器</span></div>
        <div class="grid">
          <div class="row head">
            <div class="c name">名称<i class="sort"></i></div>
            <div class="c cur">当.</div>
            <div class="c cur">最.</div>
            <div class="c note">附注</div>
          </div>
          <div class="tree">
            <i class="vline l1"></i>
            <i class="vline l2"></i>
            <div v-for="(r, i) in rows" :key="i" class="row" :class="{ odd: i % 2 === 1 }">
              <div class="c name" :class="{ dim: r.dim, bold: r.bold }" :style="{ paddingLeft: r.indent + 'px' }">
                <i class="hline" :class="{ deep: r.indent > 30 }"></i>
                <svg v-if="r.toggle" class="toggle" width="11" height="11" viewBox="0 0 11 11">
                  <rect width="11" height="11" fill="#fff" />
                  <path :d="r.toggle === 'plus' ? 'M1 5.5 H10 M5.5 1 V10' : 'M1 5.5 H10'" stroke="#222" />
                </svg>
                <Ic v-for="m in r.marks" :key="m" :n="m" :s="16" />
                <span>{{ r.text }}</span>
              </div>
              <div class="c cur"><Ic v-if="r.cur" n="parallel" :s="15" class="pal" /></div>
              <div class="c cur"><Ic v-if="r.latest" n="check" :s="17" class="ok" /></div>
              <div class="c note"></div>
            </div>
            <div v-for="n in emptyRows" :key="'e' + n" class="row" :class="{ odd: n % 2 === 0 }">
              <div class="c name"></div><div class="c cur"></div><div class="c cur"></div><div class="c note"></div>
            </div>
          </div>
        </div>
      </section>

      <aside class="resource">
        <svg class="gear" width="14" height="14" viewBox="0 0 14 14"><circle cx="7" cy="7" r="4.2" fill="none" stroke="#333" stroke-width="1.6" /><circle cx="7" cy="7" r="1" fill="#333" /><path d="M7 0 V2.5 M7 11.5 V14 M0 7 H2.5 M11.5 7 H14 M2 2 L3.8 3.8 M10.2 10.2 L12 12 M2 12 L3.8 10.2 M10.2 3.8 L12 2" stroke="#333" stroke-width="1.4" /></svg>
        <Ic n="cubes" :s="22" class="r1" />
        <div class="ractive"><Ic n="part" :s="26" /></div>
        <Ic n="partdim" :s="26" class="r3" />
        <Ic n="web" :s="24" class="r4" />
        <Ic n="clock" :s="24" class="r5" />
        <Ic n="tools" :s="24" class="r6" />
      </aside>
    </main>
    <span class="watermark">UG爱好者论坛@xiang6</span>
  </div>
</template>

<style scoped>
.app {
  position: relative;
  width: 1479px;
  height: 1151px;
  overflow: hidden;
  box-sizing: border-box;
  padding: 0 4px;
  display: flex;
  flex-direction: column;
  background: linear-gradient(90deg, #04618a 0%, #05698f 35%, #05759f 75%, #0576a3 100%);
  font-family: 'Liberation Sans', 'Noto Sans CJK SC', sans-serif;
  font-size: 14px;
  color: #222;
}
.defs { position: absolute; }
.ic { display: block; flex: none; }
i { display: block; font-style: normal; }

.caret {
  display: block;
  width: 0;
  height: 0;
  flex: none;
  border-left: 4px solid transparent;
  border-right: 4px solid transparent;
  border-top: 5px solid #222;
}
.caret.sm { border-left-width: 3.5px; border-right-width: 3.5px; border-top-width: 4px; }
.caret.white { border-top-color: #fff; }
.caret.dimc { border-top-color: #3f88a8; }

.titlebar {
  height: 40px;
  margin: 0 -4px;
  display: flex;
  align-items: center;
  color: #fff;
}
.qat { width: 849px; flex: none; display: flex; align-items: center; height: 40px; padding-left: 8px; box-sizing: border-box; }
.logo { width: 42px; font: bold 25px/40px 'Open Sans', 'Liberation Sans', sans-serif; letter-spacing: -0.8px; }
.qsep { width: 1px; height: 28px; background: #1e4f66; flex: none; }
.qi { display: block; flex: none; }
.save { margin: 0 5px 0 9px; }
.dimq { color: #3f88a8; }
.undo { margin: 0 4px 0 6px; }
.uc { margin-right: 5px; }
.redo { margin: 0 5px 0 6px; }
.q1 { margin-left: 4px; }
.q2 { margin-left: 7px; }
.q3 { margin-left: 4px; }
.q4 { margin: 0 5px 0 6px; }
.qpart { margin-left: 5px; }
.pc { margin: 0 8.5px 0 7.5px; }
.mic { margin: 0 8px 0 6px; }
.flag { margin: 0 5px; }
.w1 { margin-left: 6px; }
.w2 { margin-left: 5px; }
.win-label { font-size: 14px; margin: 0 4.5px; width: 28px; }
.custom { margin-left: 9px; }
.custom i { width: 7px; height: 1px; background: #fff; margin-bottom: 2px; }
.title { font-size: 15px; word-spacing: 1px; width: 200px; flex: none; }
.siemens { margin-left: 245px; width: 102px; font: bold 16px/40px 'Open Sans', 'Liberation Sans', sans-serif; }
.winbtn { display: block; flex: none; }
.min { width: 8px; height: 2px; background: #fff; margin: 8px 0 0 0; }
.max { width: 11px; height: 11px; border: 1px solid #fff; margin-left: 19px; }
.close { display: block; margin-left: 19px; }

.menubar {
  height: 31px;
  margin: 0 -4px 0 0;
  display: flex;
  align-items: flex-start;
  color: #fff;
  font-size: 16px;
}
.mtab { width: 64px; height: 26px; line-height: 32px; text-align: center; flex: none; }
.mtab.file { width: 96px; letter-spacing: -0.4px; padding-right: 5px; box-sizing: border-box; }
.mtab.on { color: #f7c438; border-bottom: 2px solid #f7c438; }
.search {
  margin: 3px 0 0 598px;
  width: 218px;
  height: 24px;
  box-sizing: border-box;
  background: #fff;
  border: 1px solid #8a8a8a;
  display: flex;
  align-items: center;
  justify-content: space-between;
  font-size: 14px;
  color: #b0b0b0;
  flex: none;
}
.mi { display: block; flex: none; margin: 8px 0 0 11px; }
.bang { margin-left: 22px; }

.ribbon {
  height: 107px;
  flex: none;
  background: #fff;
  border-bottom: 1px solid #dcdcdc;
  box-sizing: border-box;
  display: flex;
  padding: 5px 0 0;
}
.group { height: 99px; display: flex; flex-direction: column; border-right: 1px solid #ddd; box-sizing: border-box; flex: none; }
.gbody { flex: 1; display: flex; min-height: 0; }
.glabel { display: flex; align-items: center; height: 20px; color: #0a7fa8; font-size: 14px; padding-right: 9px; margin-bottom: -3px; }
.glabel span { flex: 1; text-align: center; }
.glabel .caret { margin-left: 5px; }
.g1 { width: 126px; }
.g2 { width: 641px; }
.g3 { width: 300px; }
.g4 { width: 65px; }
.g5 { width: 235px; }
.g6 { width: 55px; }
.g7 { flex: 1; border-right: 0; }
.pad8 { padding-left: 8px; }
.pad12 { padding-left: 12px; }
.center { justify-content: center; padding-left: 3px; }

.col-small { flex-direction: column; padding: 5px 0 0 10px; gap: 10px; }
.srow { display: flex; align-items: center; height: 28px; gap: 3px; }
.srow .caret { margin-left: 6px; }

.big { display: flex; flex-direction: column; align-items: center; flex: none; white-space: nowrap; }
.big span { margin-top: 7px; line-height: 18px; }
.big .caret { margin-top: 5px; }
.big.w40 { width: 40px; }
.big.w56 { width: 56px; }
.big.more { width: 40px; }
.big.more span { margin-top: 5px; }

.smallcol { flex: none; display: flex; flex-direction: column; }
.w101 { width: 101px; padding: 6px 0 0 6px; gap: 12px; box-sizing: border-box; }
.w149 { width: 129px; padding: 6px 0 0 6px; gap: 12px; box-sizing: border-box; }
.srow2 { display: flex; align-items: center; height: 26px; gap: 2px; white-space: nowrap; }
.srow2 .ic { margin-right: 1px; }
.org { flex-direction: column; padding: 6px 0 0 11px; gap: 12px; }
.org2 { display: flex; align-items: center; gap: 7px; }
.tri { padding: 1px 0 0 8px; gap: 10px; width: 122px; box-sizing: border-box; margin-left: 1px; }
.srow3 { display: flex; align-items: center; height: 17px; gap: 4px; white-space: nowrap; }
.g5 .more { margin-left: 1px; }

.toolbar {
  height: 32px;
  flex: none;
  background: #fff;
  border-bottom: 1px solid #aaa;
  box-sizing: border-box;
  display: flex;
  align-items: center;
  padding-top: 3px;
}
.burger { display: block; margin-left: 13px; }
.menu-btn { margin-left: 6px; width: 55px; white-space: nowrap; }
.menu-btn + .caret { margin-left: 2px; }
.tsep { width: 1px; height: 24px; background: #ddd; flex: none; }
.s1 { margin-left: 7px; }
.select {
  height: 25px;
  box-sizing: border-box;
  border: 1px solid #666;
  display: flex;
  align-items: center;
  justify-content: space-between;
  padding: 0 7px 0 2px;
  flex: none;
}
.filter { width: 183px; margin-left: 12px; }
.funnel { display: block; margin-left: 9px; }
.scope { width: 192px; margin-left: 6px; }
.s2 { margin-left: 11px; }
.tools { display: flex; align-items: center; margin-left: 12px; width: 298px; }
.tool { margin-right: 9px; }
.a1 { margin: 0 8px 0 7px; }
.a2 { margin: 0 8px 0 11px; }
.a3 { margin: 0 6px 0 10px; }
.caret.end { margin-left: auto; margin-right: 7px; margin-top: 4px; }

.workspace { flex: 1; min-height: 0; display: flex; background: #fff; }
.docarea { width: 1021px; flex: none; display: flex; flex-direction: column; border-right: 1px solid #ddd; }
.doctabs { height: 29px; display: flex; border-bottom: 2px solid #05628a; flex: none; font-size: 16px; }
.dtab { display: flex; align-items: center; gap: 4px; flex: none; padding-left: 6px; box-sizing: border-box; white-space: nowrap; }
.dtab.first { width: 106px; font-size: 15px; gap: 6px; }
.dtab.w120 { width: 120px; padding-left: 8px; }
.dtab.w129 { width: 129px; padding-left: 8px; }
.mod { display: block; margin-left: 4px; }
.w129 .mod { margin-left: 2px; }
.dtab.active { width: 119px; background: #05628a; color: #fff; margin-left: 8px; padding-left: 4px; gap: 6px; height: 30px; margin-top: -1px; }
.dtab.active .x { display: block; margin-left: 2px; }
.canvas { flex: 1; min-height: 0; position: relative; background: #fff; }
.model { display: block; position: absolute; left: 0; top: 0; }

.vtools {
  width: 44px;
  flex: none;
  box-sizing: border-box;
  padding: 14px 0 0 0;
  display: flex;
  flex-direction: column;
  align-items: center;
  gap: 8px;
  border-right: 1px solid #aaa;
}
.vsep { width: 35px; height: 1px; background: #ddd; margin-top: 1px; }

.navigator { width: 373px; flex: none; display: flex; flex-direction: column; padding: 0 6px 0 9px; box-sizing: border-box; overflow: hidden; }
.navhead { height: 32px; display: flex; align-items: center; flex: none; font-size: 15px; padding: 0 0 0 4px; box-sizing: border-box; }
.box { width: 12px; height: 12px; border: 1px solid #222; margin-right: 11px; }
.grid { flex: 1; border: 1px solid #ddd; border-bottom: 0; overflow: hidden; }
.row { display: flex; height: 24px; box-sizing: border-box; border-bottom: 1px solid #ececec; position: relative; }
.row.odd { background: #f8f8f8; }
.row.head { background: #f0f0f0; border-bottom: 1px solid #ddd; height: 25px; }
.c { border-right: 1px solid #ececec; box-sizing: border-box; display: flex; align-items: center; flex: none; font-size: 15px; white-space: nowrap; position: relative; }
.head .c { border-right-color: #ddd; padding-left: 6px; }
.head .cur { padding-left: 7px; justify-content: flex-start; }
.name { width: 251px; }
.cur { width: 30px; justify-content: center; }
.note { flex: 1; }
.sort { width: 0; height: 0; border-left: 6px solid transparent; border-right: 6px solid transparent; border-bottom: 6px solid #222; margin-left: 18px; }
.tree { position: relative; }
.dim { color: #a8a8a8; }
.bold { font-weight: bold; }
.c.name .ic { position: relative; z-index: 1; }
.c.name .ic + span { margin-left: 3px; }
.pal { margin-right: 8px; }
.ok { margin-right: 4px; }
.toggle { position: absolute; left: 5px; top: 6px; z-index: 2; display: block; }
.hline { position: absolute; left: 11px; top: 11px; width: 9px; border-top: 1px dotted #888; }
.hline.deep { left: 30px; }
.vline { position: absolute; border-left: 1px dotted #888; z-index: 1; }
.l1 { left: 11px; top: 12px; height: 72px; }
.l2 { left: 30px; top: 96px; height: 132px; }

.resource {
  flex: 1;
  background: #d9d9d9;
  border-left: 1px solid #aaa;
  display: flex;
  flex-direction: column;
  align-items: center;
}
.gear { display: block; margin-top: 7px; margin-left: 1px; }
.r1 { margin-top: 31px; margin-right: 6px; }
.ractive { width: 30px; height: 45px; margin: 3px -1px 0 -1px; align-self: flex-start; background: #fff; border: 1px solid #bbb; border-left: 0; box-sizing: border-box; display: flex; align-items: center; justify-content: center; }
.r3 { margin: 15px 3px 0 0; }
.r4 { margin: 29px 3px 0 0; }
.r5 { margin: 28px 3px 0 0; }
.r6 { margin: 17px 3px 0 0; }

.watermark {
  position: absolute;
  left: 1324px;
  top: 1132px;
  font: 14px/18px 'Liberation Mono', 'Noto Sans CJK SC', monospace;
  letter-spacing: 0.4px;
  color: #666;
  white-space: nowrap;
}
</style>

<style>
html, body { margin: 0; background: #fff; }
</style>
